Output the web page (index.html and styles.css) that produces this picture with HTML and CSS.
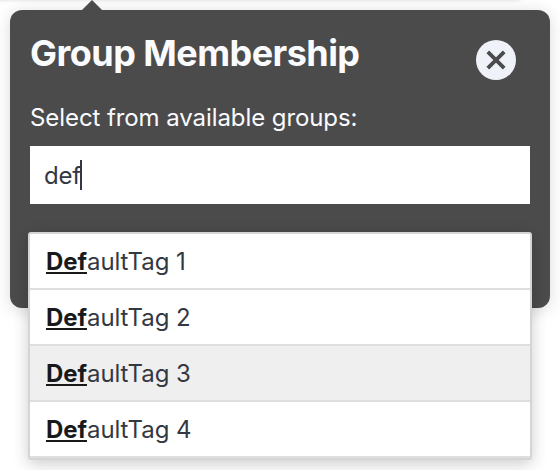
FILE: index.html
```html
<!DOCTYPE html>
<html lang="en">
<head>
<meta charset="utf-8">
<title>Group Membership</title>
<link rel="stylesheet" href="styles.css">
</head>
<body>
<div class="top-card"></div>
<section class="popover">
  <header class="popover-header">
    <h2 class="title"><span>Group Membership</span></h2>
    <button class="close" aria-label="Close">
      <svg viewBox="0 0 40 40" width="40" height="40"><path d="M11.8 11.8 28.2 28.2M28.2 11.8 11.8 28.2"/></svg>
    </button>
  </header>
  <div class="label"><span>Select from available groups:</span></div>
  <div class="input"><span class="typed">def</span><i class="caret"></i></div>
  <ul class="menu">
    <li><span><b>Def</b>aultTag 1</span></li>
    <li><span><b>Def</b>aultTag 2</span></li>
    <li class="active"><span><b>Def</b>aultTag 3</span></li>
    <li><span><b>Def</b>aultTag 4</span></li>
  </ul>
</section>
</body>
</html>
```
FILE: styles.css
```css
* { box-sizing: border-box; }
body {
  margin: 0;
  height: 470px;
  padding: 10px;
  overflow: hidden;
  position: relative;
  background: #fff;
  font-family: Inter, "Liberation Sans", sans-serif;
  color: #343843;
}
.top-card {
  position: absolute;
  left: -20px;
  top: -20px;
  width: 540px;
  height: 20px;
  box-shadow: 0 0 4px rgba(0, 0, 0, .16);
}
.popover {
  position: relative;
  width: 540px;
  height: 298px;
  padding: 20px;
  border-radius: 12px;
  background: #4b4b4b;
  box-shadow: 0 2px 16px rgba(0, 0, 0, .15);
}
.popover::before {
  content: "";
  position: absolute;
  left: 72px;
  top: -10px;
  border: 10px solid transparent;
  border-top: 0;
  border-bottom-color: #4b4b4b;
}
.popover-header {
  display: flex;
  justify-content: space-between;
  height: 60px;
}
.title {
  margin: 0;
  color: #fafbfe;
  font-size: 36px;
  line-height: 46px;
  font-weight: 700;
  letter-spacing: -.54px;
}
.close {
  width: 40px;
  height: 40px;
  margin: 10px 14px 0 0;
  padding: 0;
  border: 0;
  border-radius: 50%;
  background: #eff2f9;
}
.close svg { display: block; }
.close path {
  fill: none;
  stroke: #4b4b4b;
  stroke-width: 3.8;
  stroke-linecap: butt;
}
.label {
  height: 56px;
  padding-top: 12px;
  color: #fafbfe;
  font-size: 24px;
  line-height: 32px;
  letter-spacing: -.08px;
}
.input {
  display: flex;
  align-items: center;
  height: 58px;
  padding: 0 14px;
  background: #fff;
  font-size: 24px;
}
.typed { letter-spacing: -.2px; }
.caret {
  width: 2px;
  height: 30px;
  margin-left: -1px;
  background: #343843;
}
.menu {
  position: absolute;
  left: 18px;
  top: 222px;
  width: 504px;
  margin: 0;
  padding: 0;
  list-style: none;
  border: 2px solid #d5d5d5;
  border-radius: 3px;
  background: #fff;
  font-size: 24px;
  letter-spacing: -.07px;
  box-shadow: 0 4px 16px rgba(0, 0, 0, .2);
}
.menu li {
  height: 56px;
  padding: 0 16px;
  border-bottom: 2px solid #dedede;
  line-height: 56px;
}
.menu .active { background: #efefef; }
.menu b {
  color: #18191b;
  font-weight: 700;
  text-decoration: underline;
  text-decoration-thickness: 2px;
  text-underline-offset: 2px;
  text-decoration-skip-ink: none;
}
```
